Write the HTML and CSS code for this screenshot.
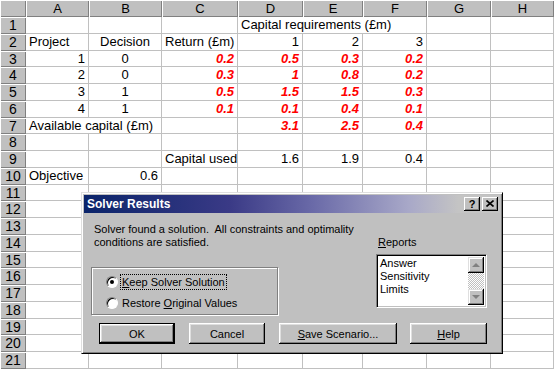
FILE: index.html
```html
<!DOCTYPE html>
<html lang="en">
<head>
    <meta charset="UTF-8">
    <meta name="viewport" content="width=device-width, initial-scale=1.0">
    <title>Solver Results</title>
    <link rel="stylesheet" href="styles.css">
</head>
<body>
    <div class="sheet" id="sheet"></div>

    <div class="dialog">
        <div class="titlebar">
            <span class="title">Solver Results</span>
            <div class="title-buttons">
                <span class="tbtn">?</span>
                <span class="tbtn">
                    <svg width="8" height="7" viewBox="0 0 8 7"><path d="M0.5 0.5 L7.5 6.5 M7.5 0.5 L0.5 6.5" stroke="#000" stroke-width="1.6"/></svg>
                </span>
            </div>
        </div>

        <div class="dialog-body">
            <div class="top">
                <div class="left">
                    <p class="message">Solver found a solution.&nbsp; All constraints and optimality<br>conditions are satisfied.</p>
                    <div class="group">
                        <div class="option">
                            <span class="radio checked"></span>
                            <span class="focus"><u>K</u>eep Solver Solution</span>
                        </div>
                        <div class="option">
                            <span class="radio"></span>
                            <span class="plain">Restore <u>O</u>riginal Values</span>
                        </div>
                    </div>
                </div>
                <div class="right">
                    <div class="reports-label"><u>R</u>eports</div>
                    <div class="listbox">
                        <ul class="items">
                            <li>Answer</li>
                            <li>Sensitivity</li>
                            <li>Limits</li>
                        </ul>
                        <div class="scrollbar">
                            <span class="arrow up"></span>
                            <span class="track"></span>
                            <span class="arrow down"></span>
                        </div>
                    </div>
                </div>
            </div>

            <div class="buttons">
                <button class="btn default">OK</button>
                <button class="btn">Cancel</button>
                <button class="btn wide"><u>S</u>ave Scenario...</button>
                <button class="btn help"><u>H</u>elp</button>
            </div>
        </div>
    </div>

    <script>
        // Worksheet contents: [column index, text, classes, span]
        const cells = {
            1: [[3, 'Capital requirements (£m)', 'l', 3]],
            2: [[0, 'Project', 'l'], [1, 'Decision', 'c'], [2, 'Return (£m)', 'l'], [3, '1', 'r'], [4, '2', 'r'], [5, '3', 'r']],
            3: [[0, '1', 'r'], [1, '0', 'c'], [2, '0.2', 'r red'], [3, '0.5', 'r red'], [4, '0.3', 'r red'], [5, '0.2', 'r red']],
            4: [[0, '2', 'r'], [1, '0', 'c'], [2, '0.3', 'r red'], [3, '1', 'r red'], [4, '0.8', 'r red'], [5, '0.2', 'r red']],
            5: [[0, '3', 'r'], [1, '1', 'c'], [2, '0.5', 'r red'], [3, '1.5', 'r red'], [4, '1.5', 'r red'], [5, '0.3', 'r red']],
            6: [[0, '4', 'r'], [1, '1', 'c'], [2, '0.1', 'r red'], [3, '0.1', 'r red'], [4, '0.4', 'r red'], [5, '0.1', 'r red']],
            7: [[0, 'Available capital (£m)', 'l', 2], [3, '3.1', 'r red'], [4, '2.5', 'r red'], [5, '0.4', 'r red']],
            9: [[2, 'Capital used', 'l'], [3, '1.6', 'r'], [4, '1.9', 'r'], [5, '0.4', 'r']],
            10: [[0, 'Objective', 'l'], [1, '0.6', 'r']]
        };

        const letters = ['A', 'B', 'C', 'D', 'E', 'F', 'G', 'H'];
        const sheet = document.getElementById('sheet');

        function addCell(className, text, span) {
            const div = document.createElement('div');
            div.className = className;
            div.textContent = text || '';
            if (span > 1) {
                div.style.gridColumn = 'span ' + span;
            }
            sheet.appendChild(div);
        }

        // Column headers
        addCell('corner');
        letters.forEach(l => addCell('col-head', l));

        // Rows
        for (let r = 1; r <= 21; r++) {
            addCell('row-head', r);
            const specs = cells[r] || [];
            for (let c = 0; c < letters.length; c++) {
                const spec = specs.find(s => s[0] === c);
                if (spec) {
                    const span = spec[3] || 1;
                    addCell('cell ' + spec[2], spec[1], span);
                    c += span - 1;
                } else {
                    addCell('cell');
                }
            }
        }
    </script>
</body>
</html>
```

FILE: styles.css
```css
* {
    box-sizing: border-box;
}

body {
    margin: 0;
    width: 554px;
    height: 370px;
    overflow: hidden;
    background: #fff;
    font-family: 'Liberation Sans', Arial, sans-serif;
    position: relative;
}

/* Worksheet */
.sheet {
    display: grid;
    grid-template-columns: 26px 63px 73px 76px 65px 60px 64px 64px 63px;
    grid-template-rows: 17px repeat(21, 16.75px);
    font-size: 13px;
    color: #000;
}

.corner,
.col-head,
.row-head {
    background: #c0c0c0;
    box-shadow: inset 1px 1px #fff, inset -1px -1px #808080;
    text-align: center;
    line-height: 17px;
}

.row-head {
    line-height: 16.75px;
    font-size: 14px;
}

.cell {
    border-right: 1px solid #c0c0c0;
    border-bottom: 1px solid #c0c0c0;
    line-height: 16px;
    padding: 0 3px;
    white-space: nowrap;
}

.cell.l { text-align: left; }
.cell.r { text-align: right; }
.cell.c { text-align: center; }

.cell.red {
    color: #ff0000;
    font-weight: bold;
    font-style: italic;
}

/* Solver Results dialog */
.dialog {
    position: absolute;
    left: 81px;
    top: 192px;
    width: 422px;
    height: 162px;
    background: #c0c0c0;
    border: 1px solid;
    border-color: #dfdfdf #000 #000 #dfdfdf;
    box-shadow: inset 1px 1px #fff, inset -1px -1px #808080;
    padding: 2px;
    font-family: 'Liberation Sans', Arial, sans-serif;
    font-size: 11px;
    color: #000;
}

.titlebar {
    height: 18px;
    display: flex;
    align-items: center;
    justify-content: space-between;
    padding: 0 2px 0 3px;
    background: linear-gradient(to right, #0a246a, #3a3a86 35%, #6a6aa8 55%, #a8a8c8 78%, #c4c4c4 90%);
}

.title {
    color: #fff;
    font-weight: bold;
    font-size: 12px;
}

.title-buttons {
    display: flex;
    gap: 2px;
}

.tbtn {
    width: 16px;
    height: 14px;
    background: #c0c0c0;
    box-shadow: inset -1px -1px #000, inset 1px 1px #fff, inset -2px -2px #808080;
    display: flex;
    align-items: center;
    justify-content: center;
    font-weight: bold;
    font-size: 11px;
    padding-bottom: 1px;
}

.dialog-body {
    padding: 10px 0 0 7px;
}

.top {
    display: flex;
}

.left {
    width: 187px;
}

.message {
    margin: 0;
    padding-left: 3px;
    line-height: 13px;
    white-space: nowrap;
}

.group {
    margin-top: 18px;
    height: 48px;
    border: 1px solid #808080;
    box-shadow: inset 1px 1px #fff, 1px 1px #fff;
    padding: 5px 0 0 14px;
}

.option {
    display: flex;
    align-items: center;
    height: 17px;
    margin-bottom: 4px;
}

.radio {
    width: 12px;
    height: 12px;
    border-radius: 50%;
    background: #fff;
    border: 1px solid;
    border-color: #808080 #fff #fff #808080;
    box-shadow: inset 1px 1px #000;
    position: relative;
    margin-right: 3px;
}

.radio.checked::after {
    content: '';
    position: absolute;
    left: 3px;
    top: 3px;
    width: 4px;
    height: 4px;
    border-radius: 50%;
    background: #000;
}

.focus {
    outline: 1px dotted #000;
    padding: 1px 1px;
}

.plain {
    padding: 1px 1px;
}

.right {
    margin-left: 98px;
    padding-top: 13px;
}

.reports-label {
    line-height: 13px;
    padding-left: 2px;
    margin-bottom: 5px;
}

.listbox {
    width: 111px;
    height: 54px;
    background: #fff;
    border: 1px solid;
    border-color: #808080 #fff #fff #808080;
    box-shadow: inset 1px 1px #000, inset -1px -1px #c0c0c0;
    padding: 2px;
    display: flex;
}

.items {
    list-style: none;
    margin: 0;
    padding: 0 0 0 1px;
    flex: 1;
    line-height: 13px;
}

.scrollbar {
    width: 16px;
    display: flex;
    flex-direction: column;
}

.arrow {
    height: 16px;
    background: #c0c0c0;
    box-shadow: inset -1px -1px #000, inset 1px 1px #dfdfdf, inset -2px -2px #808080, inset 2px 2px #fff;
    position: relative;
}

.arrow::after {
    content: '';
    position: absolute;
    left: 4px;
    border-left: 4px solid transparent;
    border-right: 4px solid transparent;
}

.arrow.up::after {
    top: 6px;
    border-bottom: 4px solid #808080;
}

.arrow.down::after {
    top: 6px;
    border-top: 4px solid #808080;
}

.track {
    flex: 1;
    background: repeating-conic-gradient(#fff 0 25%, #c0c0c0 0 50%) 0 0 / 2px 2px;
}

.buttons {
    display: flex;
    gap: 14px;
    margin-top: 8px;
    padding-left: 8px;
}

.btn {
    width: 76px;
    height: 21px;
    background: #c0c0c0;
    border: none;
    box-shadow: inset -1px -1px #000, inset 1px 1px #fff, inset -2px -2px #808080, inset 2px 2px #dfdfdf;
    font-family: inherit;
    font-size: 11px;
    color: #000;
    padding: 0;
}

.btn.default {
    border: 1px solid #000;
}

.btn.wide {
    width: 118px;
}

.btn.help {
    width: 77px;
    margin-left: -1px;
}
```
